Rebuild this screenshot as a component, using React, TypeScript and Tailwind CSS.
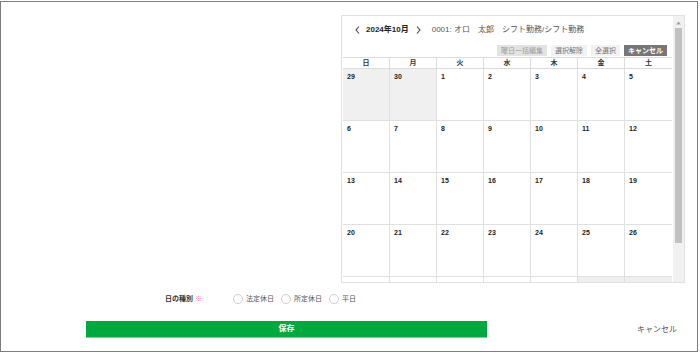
const WEEKDAYS = ['日', '月', '火', '水', '木', '金', '土']

type Day = { d: number; other: boolean }

function buildWeeks(): Day[][] {
  const days: Day[] = [
    { d: 29, other: true },
    { d: 30, other: true },
  ]
  for (let i = 1; i <= 31; i++) days.push({ d: i, other: false })
  for (let i = 1; i <= 2; i++) days.push({ d: i, other: true })
  const weeks: Day[][] = []
  for (let i = 0; i < days.length; i += 7) weeks.push(days.slice(i, i + 7))
  return weeks
}

function Chevron({ dir }: { dir: 'left' | 'right' }) {
  return (
    <svg width="5" height="8" viewBox="0 0 5 8" className="text-[#444]">
      <polyline
        points={dir === 'left' ? '4,0.5 1,4 4,7.5' : '1,0.5 4,4 1,7.5'}
        fill="none"
        stroke="currentColor"
        strokeWidth="1.1"
      />
    </svg>
  )
}

function Radio({ label }: { label: string }) {
  return (
    <label className="flex items-center gap-[3px]">
      <span className="w-[10px] h-[10px] rounded-full border border-[#cfcfcf] bg-white" />
      <span>{label}</span>
    </label>
  )
}

function Calendar() {
  const weeks = buildWeeks()
  return (
    <div className="w-[344px] h-[268px] border border-[#e2e2e2] bg-white flex overflow-hidden">
      <div className="flex-1 overflow-hidden pt-[8px]">
        <div className="flex items-center h-[12px] pl-[13px] text-[8px] text-[#333]">
          <Chevron dir="left" />
          <span className="ml-[6px] font-bold text-[#222]">2024年10月</span>
          <span className="ml-[7px]"><Chevron dir="right" /></span>
          <span className="ml-[11px] text-[#555]">0001: オロ　太郎　シフト勤務/シフト勤務</span>
        </div>
        <div className="mt-[9px] h-[11px] flex justify-end gap-[4px] pr-[6px] text-[7px] leading-[11px]">
          <span className="px-[4px] bg-[#e3e3e3] text-[#a0a0a0]">曜日一括編集</span>
          <span className="px-[4px] bg-[#f2f2f2] text-[#777]">選択解除</span>
          <span className="px-[4px] bg-[#f2f2f2] text-[#777]">全選択</span>
          <span className="px-[4px] bg-[#777] text-white font-bold">キャンセル</span>
        </div>
        <div className="mt-[1px] ml-[1px] w-[329px] border-t border-[#dcdcdc]">
          <div className="grid grid-cols-7 h-[11px] border-b border-[#dcdcdc]">
            {WEEKDAYS.map((w, i) => (
              <div
                key={w}
                className={`text-center text-[7px] leading-[10px] font-bold text-[#333] ${i < 6 ? 'border-r border-[#dcdcdc]' : ''}`}
              >
                {w}
              </div>
            ))}
          </div>
          {weeks.map((week, wi) => (
            <div key={wi} className="grid grid-cols-7 h-[52px] border-b border-[#e0e0e0]">
              {week.map((day, di) => (
                <div
                  key={di}
                  className={`pl-[4px] pt-[4px] text-[7px] leading-[8px] font-bold text-[#222] ${day.other ? 'bg-[#f0f0f0]' : 'bg-white'} ${di < 6 ? 'border-r border-[#e0e0e0]' : ''}`}
                >
                  {wi < 4 ? day.d : ''}
                </div>
              ))}
            </div>
          ))}
        </div>
      </div>
      <div className="w-[11px] bg-[#f1f1f1] flex flex-col items-center">
        <svg width="5" height="4" viewBox="0 0 5 4" className="mt-[5px]">
          <polygon points="2.5,0.5 5,3.5 0,3.5" fill="#a3a3a3" />
        </svg>
        <div className="mt-[3px] w-[7px] h-[215px] bg-[#c1c1c1]" />
      </div>
    </div>
  )
}

export default function App() {
  return (
    <div className="w-[700px] h-[355px] bg-white pt-px font-['Liberation_Sans','Noto_Sans_CJK_JP',sans-serif]">
      <div className="w-[698px] h-[351px] border border-[#7d7d7d] flex flex-col">
        <div className="pl-[340px] pt-[13px]">
          <Calendar />
        </div>
        <div className="mt-[11px] flex items-center h-[10px] text-[7px] text-[#555]">
          <div className="ml-[164px] w-[68px] font-bold text-[#333]">
            日の種別 <span className="text-[#f0709a] font-normal">※</span>
          </div>
          <div className="flex items-center gap-[7px]">
            <Radio label="法定休日" />
            <Radio label="所定休日" />
            <Radio label="平日" />
          </div>
        </div>
        <div className="mt-[17px] flex items-center">
          <button className="ml-[85px] w-[401px] h-[17px] bg-[#00a93f] text-white text-[8px] font-bold border-b border-[#7fd39c]">
            保存
          </button>
          <span className="ml-[150px] text-[8px] text-[#555]">キャンセル</span>
        </div>
      </div>
    </div>
  )
}
